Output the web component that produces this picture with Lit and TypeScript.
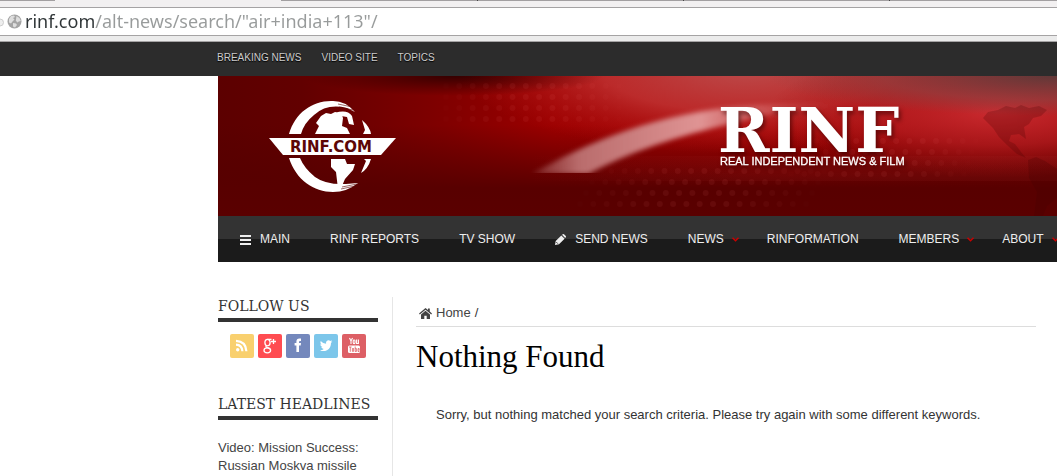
import { LitElement, html, css, svg, nothing } from "lit";
import { customElement } from "lit/decorators.js";

/* ---------- browser address bar ---------- */
@customElement("address-bar")
class AddressBar extends LitElement {
  static styles = css`
    :host { display: block; background: #f2f0f1; }
    .tabs { display: grid; grid-template-columns: 55px 226px 197px 206px 206px 1fr; height: 1px; }
    .tab { background: #a29fa1; border-right: 1px solid #444; }
    .tab.first, .tab:last-child { border: 0; }
    .tab.active { background: #f2f0f1; border: 0; }
    .field {
      display: flex; align-items: center; gap: 3px; height: 27px; margin-top: 6px;
      background: #fff; border: solid #a5a3a4; border-width: 1px 0; padding-right: 12px;
    }
    .edge { width: 4px; height: 14px; flex: none; }
    .globe { width: 15px; height: 15px; flex: none; }
    .url {
      flex: 1; min-width: 0; border: 0; padding: 0; outline: 0; height: 27px;
      font: 18px/27px "Noto Sans", "Open Sans", sans-serif;
      color: transparent; caret-color: #333;
      background: linear-gradient(to right, #2e3436 70px, #989b9b 70px);
      -webkit-background-clip: text; background-clip: text;
    }
    .below { height: 5px; background: #ebebeb; border-bottom: 1px solid #a5a3a4; }
  `;
  render() {
    return html`
      <div class="tabs">
        <span class="tab first"></span><span class="tab active"></span><span class="tab"></span>
        <span class="tab"></span><span class="tab"></span><span class="tab"></span>
      </div>
      <div class="field">
        <svg class="edge" viewBox="0 0 4 14"><path d="M0 4a3 3 0 0 1 0 7" fill="#eee" stroke="#ccc"/></svg>
        <svg class="globe" viewBox="0 0 15 15">
          <circle cx="7.5" cy="7.5" r="7" fill="#a4a4a4"/>
          <path d="M2 5l2-3 3-.5 1 1.500-2 1 1.500 1.500-2 2-1.500 2-2-1zM9.500 2l3 2 1.300 3-2 .5-1.500 1-1.500-2zM6 9l3 .5 1 1.500-2 2.500-2-1z" fill="#dedede"/>
        </svg>
        <input class="url" type="text" aria-label="Address" spellcheck="false"
          .value=${'rinf.com/alt-news/search/"air+india+113"/'} />
      </div>
      <div class="below"></div>
    `;
  }
}

/* ---------- red masthead ---------- */
const dotRows = (x: number, y: number, cols: number, rows: number, shift: number) =>
  Array.from({ length: rows }, (_, r) =>
    Array.from({ length: cols }, (_, c) => svg`
      <circle cx=${x + c * 13.3 + r * shift} cy=${y + r * 11} r="3"
        opacity=${(0.08 * Math.sin(((c + 1) / (cols + 1)) * Math.PI)).toFixed(3)} />`)
  );

@customElement("site-banner")
class SiteBanner extends LitElement {
  static styles = css`
    :host { display: block; height: 140px; background: #5a0000; overflow: hidden; }
    .art { display: block; width: 100%; height: 140px; }
    .badge { font: bold 15px "DejaVu Sans", sans-serif; fill: #5c0606; }
    .name { font: bold 62px "DejaVu Serif", serif; fill: #fff; }
    .motto { font: 11px "Liberation Sans", Arial, sans-serif; fill: #fff; stroke: #fff; stroke-width: 0.3; }
    .lift { filter: drop-shadow(2px 3px 2px rgba(50, 0, 0, 0.6)); }
  `;
  render() {
    return html`
      <svg class="art" role="img" aria-label="RINF.COM, Real Independent News and Film">
        <defs>
          <linearGradient id="left" gradientUnits="userSpaceOnUse" x1="0" y1="0" x2="839" y2="0">
            <stop offset="0" stop-color="#5c0000"/><stop offset=".1" stop-color="#620000"/>
            <stop offset=".28" stop-color="#820000"/><stop offset=".4" stop-color="#9c0000"/>
            <stop offset=".65" stop-color="#a80202"/><stop offset="1" stop-color="#8c0404"/>
          </linearGradient>
          <linearGradient id="shade" x1="0" y1="0" x2="0" y2="1">
            <stop offset="0" stop-color="#520000" stop-opacity="0"/>
            <stop offset=".35" stop-color="#520000" stop-opacity="0"/>
            <stop offset=".72" stop-color="#560000" stop-opacity=".8"/>
            <stop offset=".8" stop-color="#580000"/>
            <stop offset="1" stop-color="#5a0000"/>
          </linearGradient>
          <radialGradient id="glow" gradientUnits="userSpaceOnUse" cx="0" cy="0" r="1"
            gradientTransform="translate(530 -6) scale(290 84)">
            <stop offset="0" stop-color="#bc4a4a"/><stop offset=".5" stop-color="#c03232" stop-opacity=".85"/>
            <stop offset="1" stop-color="#b01010" stop-opacity="0"/>
          </radialGradient>
          <radialGradient id="glow2" gradientUnits="userSpaceOnUse" cx="0" cy="0" r="1"
            gradientTransform="translate(780 36) scale(230 66)">
            <stop offset="0" stop-color="#cb2b30"/><stop offset=".5" stop-color="#b81e22" stop-opacity=".7"/>
            <stop offset="1" stop-color="#a01010" stop-opacity="0"/>
          </radialGradient>
          <radialGradient id="dusk" gradientUnits="userSpaceOnUse" cx="0" cy="0" r="1"
            gradientTransform="translate(839 0) scale(290 40)">
            <stop offset="0" stop-color="#603838"/><stop offset=".6" stop-color="#844" stop-opacity=".6"/>
            <stop offset="1" stop-color="#844" stop-opacity="0"/>
          </radialGradient>
          <radialGradient id="night" gradientUnits="userSpaceOnUse" cx="0" cy="0" r="1"
            gradientTransform="translate(235 0) scale(150 20)">
            <stop offset="0" stop-color="#350000"/><stop offset="1" stop-color="#400000" stop-opacity="0"/>
          </radialGradient>
          <linearGradient id="beam" gradientUnits="userSpaceOnUse" x1="315" y1="0" x2="620" y2="0">
            <stop offset="0" stop-color="#b06868" stop-opacity=".3"/><stop offset=".15" stop-color="#b96c6c"/>
            <stop offset=".55" stop-color="#e09494"/><stop offset="1" stop-color="#d05050" stop-opacity="0"/>
          </linearGradient>
          <linearGradient id="haze" gradientUnits="userSpaceOnUse" x1="310" y1="0" x2="839" y2="0">
            <stop offset="0" stop-color="#a33" stop-opacity="0"/><stop offset=".4" stop-color="#a33" stop-opacity=".2"/>
            <stop offset="1" stop-color="#a33" stop-opacity=".2"/>
          </linearGradient>
          <filter id="soft" x="-5%" y="-20%" width="110%" height="140%"><feGaussianBlur stdDeviation="2.500"/></filter>
          <clipPath id="above"><rect width="839" height="97"/></clipPath>
        </defs>

        <rect width="100%" height="140" fill="url(#left)"/>
        <rect width="100%" height="140" fill="url(#shade)"/>
        <rect width="100%" height="104" fill="url(#glow)"/>
        <rect width="100%" height="104" fill="url(#glow2)"/>
        <rect width="100%" height="60" fill="url(#dusk)"/>
        <rect width="100%" height="40" fill="url(#night)"/>
        <rect x="310" y="80" width="100%" height="25" fill="url(#haze)" opacity=".5"/>
        <g fill="#ff8080">
          ${dotRows(228, 10, 14, 4, 0)} ${dotRows(380, 95, 18, 4, -6)} ${dotRows(585, 65, 14, 4, -4)}
        </g>
        <g clip-path="url(#above)">
          <path d="M314 98C370 66 440 36 530 30Q580 26 620 30Q560 34 520 46Q430 66 370 98Z"
            fill="url(#beam)" filter="url(#soft)"/>
        </g>
        <g fill="#400000" opacity=".22">
          <path d="M765 42l5-6 10-2 8-4 9 2 6-3 8 3 10-2 8 4-6 6-8 2-4 6-5 3 2 12-7-5-8 1-2 6 6 3 6 8 5 6-9-4-10-9-8-8-6-9z"/>
          <path d="M810 84l8-3 9 4 12 8v29l-10 8-4 10h-9l3-24-8-14z"/>
        </g>

        <g fill="#fff">
          <path d="M71 58C77 37 94 25 113 25Q127 24 137 36L129 32Q109 27 96 39Q86 47 83 58Z"/>
          <path d="M71 82C78 104 96 116 115 116Q129 116 140 107L128 108Q108 109 97 101Q86 92 82 82Z"/>
          <path d="M97 58l4-8-3-3 5-7 5-3 5 1 4-2 6 1 2 5-1 8 5 2 3 6zM117 37q12-4 17 3l2 9-5-1-2-7-6-1zM144 44q8 7 9 14h-8l2-4z"/>
          <path d="M113 83h14l2 5h8l-2 6-8 9-3 7-4 3-2-17-5-5zM146 83h7q-3 10-10 14l5-12z"/>
          <path d="M51 62H178L163 79H65Z"/>
        </g>
        <g stroke="#5c0606" stroke-width="1" opacity=".6">
          <path d="M120 28l14 3M121 31l14 3M124 111l15-3M123 113l14-3"/>
        </g>
        <text class="badge" x="113" y="76" text-anchor="middle">RINF.COM</text>

        <g class="lift">
          <text class="name" x="500" y="76">RINF</text>
          <text class="motto" x="502" y="89">REAL INDEPENDENT NEWS &amp; FILM</text>
        </g>
      </svg>
    `;
  }
}

/* ---------- main navigation ---------- */
type NavItem = { label: string; icon?: "bars" | "pencil"; menu?: boolean };

const NAV: NavItem[] = [
  { label: "MAIN", icon: "bars" },
  { label: "RINF REPORTS" },
  { label: "TV SHOW" },
  { label: "SEND NEWS", icon: "pencil" },
  { label: "NEWS", menu: true },
  { label: "RINFORMATION" },
  { label: "MEMBERS", menu: true },
  { label: "ABOUT", menu: true },
];

const GLYPHS = {
  bars: svg`<path d="M0 1h11v2H0zM0 5h11v2H0zM0 9h11v2H0z"/>`,
  pencil: svg`<path d="M0 11l.7-4L6.300 1.400 9.600 4.700 4 10.300zM7 .8l.8-.6q.6-.4 1.200 0L10.800 2q.5.600 0 1.200l-.6.700z"/><path d="M1.400 8.200l1.400 1.400" stroke="#222" stroke-width="1"/>`,
};

@customElement("site-nav")
class SiteNav extends LitElement {
  static styles = css`
    :host { display: block; overflow: hidden; background: linear-gradient(#333 50%, #1b1b1b 50%); }
    .list { display: flex; margin: 0; padding: 0 0 0 2px; list-style: none; }
    .link {
      display: flex; align-items: center; height: 46px; padding: 0 20px;
      font: 12px/46px "Liberation Sans", Arial, sans-serif; color: #eee;
      text-decoration: none; white-space: nowrap;
    }
    .link.menu { padding-right: 8px; }
    .icon { width: 11px; height: 11px; margin-right: 9px; fill: #eee; }
    .chevron { width: 7px; height: 5px; margin-left: 8px; fill: none; stroke: #c00; stroke-width: 1.5; }
  `;
  render() {
    return html`<nav aria-label="Main"><ul class="list">
      ${NAV.map((n) => html`<li>
        <a class="link ${n.menu ? "menu" : ""}" href="#">
          ${n.icon ? html`<svg class="icon" viewBox="0 0 11 11">${GLYPHS[n.icon]}</svg>` : nothing}
          <span>${n.label}</span>
          ${n.menu ? html`<svg class="chevron" viewBox="0 0 7 5"><path d="M.5.700l3 3 3-3"/></svg>` : nothing}
        </a></li>`)}
    </ul></nav>`;
  }
}

/* ---------- social buttons ---------- */
const SOCIAL = [
  { name: "RSS", tone: "rss", art: svg`
    <circle cx="7.7" cy="15.800" r="1.700" fill="#fff"/>
    <path d="M6 10.600q6 .3 6.400 6.600M6 6.800q10 .5 10.400 10.400" fill="none" stroke="#fff" stroke-width="2.200"/>` },
  { name: "Google+", tone: "google", art: svg`
    <g fill="none" stroke="#fff" stroke-width="1.300">
      <ellipse cx="9.500" cy="8.600" rx="2.600" ry="3.200"/><ellipse cx="9.300" cy="16.300" rx="3.300" ry="2.500"/>
      <path d="M9.500 5.400h4M8.500 11.500q-1.500 1.300 1 2.100l2.400 1.200M15.500 5v5M13 7.500h5"/></g>` },
  { name: "Facebook", tone: "facebook", art: svg`
    <path d="M10.400 18v-6.400H8.600V9h1.800V7.400q0-3 3-3H15v2.500h-1q-1 0-1 1V9h2l-.3 2.600H13V18z" fill="#fff"/>` },
  { name: "Twitter", tone: "twitter", art: svg`
    <path d="M6 16.200q2.200.1 3.700-1.200-2-.2-2.500-1.900h1.200Q6.300 12.400 6.300 10.300l1.200.3Q5.600 9 6.700 7q2.200 2.600 5.400 2.800-.5-3.100 2.100-3.600 1.300-.1 2.100.8l1.700-.7-1 1.500 1.300-.3-1.300 1.400q.1 5-4 7.300-3.900 1.700-7 0z" fill="#fff"/>` },
  { name: "YouTube", tone: "youtube", art: svg`
    <rect x="6" y="11.500" width="12" height="7.500" rx="1.500" fill="#fff"/>
    <g fill="none" stroke="#fff" stroke-width="1.100"><path d="M7.500 4l1.500 3 1.500-3M9 7v3"/><rect x="11.200" y="6" width="1.800" height="3.600" rx=".8"/><path d="M14.600 5.600v3.900h1.800V5.600"/></g>
    <g fill="none" stroke="#dd5f65" stroke-width=".8"><path d="M7 13h2.600M8.300 13v4.800M10.400 14v3.400h1.200V14M13.200 12.500v5h1.200v-3h-1.200M17.200 16.500v1h-1.200v-3h1.200v1.400h-1"/></g>` },
];

@customElement("social-links")
class SocialLinks extends LitElement {
  static styles = css`
    :host { display: flex; justify-content: center; gap: 4px; }
    .button { display: block; width: 24px; height: 24px; border-radius: 2px; }
    .art { display: block; width: 24px; height: 24px; }
    .rss { background: #f9d06e; }
    .google { background: #ff4c51; }
    .facebook { background: #7488bc; }
    .twitter { background: #7cc6ea; }
    .youtube { background: #dd5f65; }
  `;
  render() {
    return SOCIAL.map((s) => html`<a class="button ${s.tone}" href="#" aria-label=${s.name}>
      <svg class="art" viewBox="0 0 24 24">${s.art}</svg></a>`);
  }
}

/* ---------- page ---------- */
@customElement("app-root")
class AppRoot extends LitElement {
  static styles = css`
    :host {
      display: block; min-height: 100vh; overflow: hidden; background: #fff;
      font: 13px/18px "Liberation Sans", Arial, sans-serif; color: #333;
    }
    .topbar { background: #2c2c2c; padding-left: 217px; }
    .toplist { display: flex; gap: 20px; margin: 0; padding: 0; list-style: none; }
    .toplink {
      display: block; font-size: 10px; line-height: 32px; height: 34px; color: #ccc;
      text-decoration: none; text-shadow: 0 1px 1px #000; white-space: nowrap;
    }
    .page { margin-left: 218px; }
    .columns {
      display: grid; grid-template-columns: 160px minmax(0, 1fr); column-gap: 14px;
      padding: 35px 21px 0 0;
    }
    .heading {
      margin: 0 0 12px; padding-bottom: 2px; border-bottom: 4px solid #333; color: #333;
      font: 14px/19px "DejaVu Serif", serif; white-space: nowrap;
    }
    .widget + .widget { margin-top: 37px; }
    .headline { display: block; margin-top: 19px; color: #444; text-decoration: none; }
    .main { border-left: 1px solid #e6e6e6; padding: 7px 0 0 23px; min-height: 172px; }
    .crumbs {
      display: flex; align-items: center; gap: 4px; padding: 0 3px 4px;
      border-bottom: 1px solid #ddd;
    }
    .crumb { display: flex; align-items: center; gap: 4px; color: #444; text-decoration: none; }
    .house { width: 13px; height: 11px; fill: #444; }
    .title { margin: 12px 0 0; color: #000; font: 31px/36px "Liberation Serif", serif; }
    .message { margin: 31px 20px 0; }
  `;
  render() {
    return html`
      <address-bar></address-bar>
      <nav class="topbar" aria-label="Top"><ul class="toplist">
        ${["BREAKING NEWS", "VIDEO SITE", "TOPICS"].map((t) => html`<li><a class="toplink" href="#">${t}</a></li>`)}
      </ul></nav>
      <div class="page">
        <header><site-banner></site-banner><site-nav></site-nav></header>
        <div class="columns">
          <aside>
            <section class="widget">
              <h2 class="heading">FOLLOW US</h2>
              <social-links></social-links>
            </section>
            <section class="widget">
              <h2 class="heading">LATEST HEADLINES</h2>
              <a class="headline" href="#">Video: Mission Success: Russian Moskva missile</a>
            </section>
          </aside>
          <main class="main">
            <nav class="crumbs" aria-label="Breadcrumb">
              <a class="crumb" href="#">
                <svg class="house" viewBox="0 0 13 11"><path d="M6.500 0L9 2.100V.6h1.800v3L13 5.500l-.8.900L6.500 1.700.8 6.400 0 5.500zM6.500 2.700L11 6.400V11H7.700V7.700H5.300V11H2V6.400z"/></svg>
                Home</a><span>/</span>
            </nav>
            <h1 class="title">Nothing Found</h1>
            <p class="message">Sorry, but nothing matched your search criteria. Please try again with some different keywords.</p>
          </main>
        </div>
      </div>
    `;
  }
}
